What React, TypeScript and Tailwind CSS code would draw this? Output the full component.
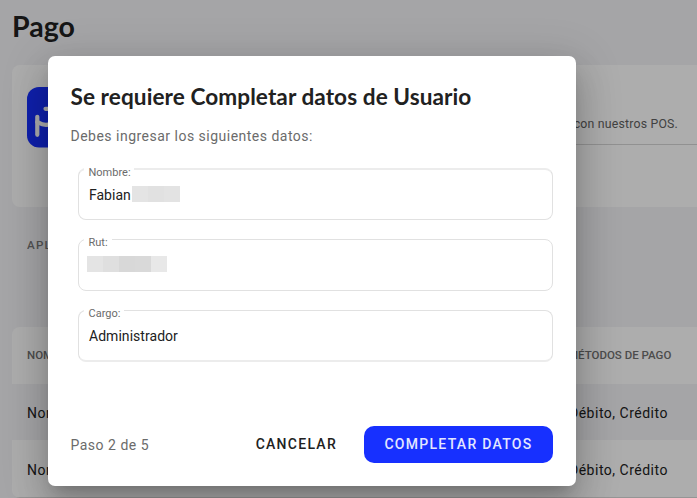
import { ReactNode } from "react";
import clsx from "clsx";

const rows = [
  { name: "Nombre local 1", methods: "Débito, Crédito" },
  { name: "Nombre local 2", methods: "Débito, Crédito" },
];

function AppLogo() {
  return (
    <svg viewBox="0 0 60 60" className="w-[60px] h-[60px] shrink-0 overflow-visible">
      <rect width="60" height="60.600" rx="12" fill="#1730ff" />
      <g fill="none" stroke="#fff" strokeWidth="4.200" strokeLinecap="round" strokeLinejoin="round">
        <path d="M10.300 29.800v18" />
        <path d="M10.300 35c2 1 4 2.800 8.700 2.800 9 0 15-4 15-10 0-4-3-6-7-6h-8.500" />
      </g>
    </svg>
  );
}

function Field({ label, labelWidth, edge, children }: { label: string; labelWidth: string; edge: string; children?: ReactNode }) {
  return (
    <div className={clsx("relative flex h-[52px] items-center rounded-[8px] border border-[#e1e1e1] pl-[10px]", edge)}>
      <span className={clsx("absolute -top-[3px] left-[5px] h-[11px] overflow-hidden bg-white pl-[4.500px] text-[11px] leading-[11px] text-[#6b6b6b]", labelWidth)}>
        {label}
      </span>
      {children}
    </div>
  );
}

export default function App() {
  return (
    <div className="relative h-[498px] w-[697px] overflow-hidden bg-[#f4f4f7] font-['Roboto','Liberation_Sans',sans-serif] text-[#212121]">
      {/* Page behind the dialog */}
      <div className="flex w-[760px] flex-col pl-[12px]">
        <h1 className="h-[65px] pt-[7px] font-['Lato',sans-serif] text-[28.500px] font-bold leading-[38px]">Pago</h1>

        <section className="flex h-[142px] rounded-[8px] bg-white pl-[15px] pt-[22px]">
          <AppLogo />
          <div className="ml-[28px] flex h-[58px] w-[640px] flex-col border-b border-[#d6d6d6] pt-[28px]">
            <p className="w-[563px] text-right text-[12.300px] leading-[18px] tracking-[0.200px] text-[#616161]">
              Vende con nuestros POS.
            </p>
          </div>
        </section>

        <div className="h-[120px] pl-[15px] pt-[30px] text-[11.600px] font-medium leading-[16px] tracking-[1.200px] text-[#7a7a7a]">
          <span className="block w-[50px] overflow-hidden">APLIC</span>
        </div>

        <section className="overflow-hidden rounded-[8px] bg-white">
          <div className="grid h-[57px] grid-cols-[541px_1fr] items-center pl-[15px] pt-px text-[11.500px] font-medium text-[#717171]">
            <span>NOMBRE</span>
            <span>MÉTODOS DE PAGO</span>
          </div>
          {rows.map((row, i) => (
            <div
              key={row.name}
              className={clsx(
                "grid grid-cols-[542px_1fr] items-center pl-[15px] text-[14px] tracking-[0.500px]",
                i === 0 ? "h-[56px] bg-[#f4f4f7] pt-[2px]" : "h-[58px] border-b border-[#dcdcdc] pt-[3px]"
              )}
            >
              <span>{row.name}</span>
              <span>{row.methods}</span>
            </div>
          ))}
        </section>
      </div>

      {/* Dialog */}
      <div className="absolute inset-0 flex items-start bg-black/[0.320] pl-[48px] pt-[55.500px]">
        <div className="flex h-[430.500px] w-[527.500px] flex-col rounded-[7px] bg-white px-[22.500px] shadow-[0_10px_14px_-7px_rgba(0,0,0,0.2),0_23px_36px_3px_rgba(0,0,0,0.14),0_8px_43px_8px_rgba(0,0,0,0.12)]">
          <h2 className="mt-[26.500px] whitespace-nowrap font-['Lato',sans-serif] text-[22.600px] font-bold leading-[30px] tracking-[0.070px]">
            Se requiere Completar datos de Usuario
          </h2>
          <p className="mt-[14px] text-[14px] leading-[20px] tracking-[0.490px] text-[#6b6b6b]">
            Debes ingresar los siguientes datos:
          </p>

          <div className="ml-[7.500px] mt-[22px] flex w-[475px] flex-col gap-[19px] text-[14px]">
            <Field label="Nombre:" labelWidth="w-[50px]" edge="border-t-2 border-t-[#ececec]">
              <span className="pt-px">Fabian</span>
              <span className="ml-px flex pb-[2px]">
                <i className="h-[16px] w-[16px] bg-[#e4e4e4]" />
                <i className="h-[16px] w-[16px] bg-[#e1e1e1]" />
                <i className="h-[16px] w-[16px] bg-[#e3e3e3]" />
              </span>
            </Field>
            <Field label="Rut:" labelWidth="w-[28px]" edge="pb-[2px]">
              <span className="-ml-[2px] flex">
                <i className="h-[16px] w-[16px] bg-[#e4e4e4]" />
                <i className="h-[16px] w-[16px] bg-[#dfdfdf]" />
                <i className="h-[16px] w-[16px] bg-[#d8d8d8]" />
                <i className="h-[16px] w-[16px] bg-[#d9d9d9]" />
                <i className="h-[16px] w-[16px] bg-[#e8e8e8]" />
              </span>
            </Field>
            <Field label="Cargo:" labelWidth="w-[40px]" edge="border-b-2 border-b-[#ececec]">
              <span className="pt-[2px] tracking-[0.040px]">Administrador</span>
            </Field>
          </div>

          <div className="mt-[63.500px] flex h-[38px] w-[482.500px] items-center">
            <span className="pt-px text-[14px] tracking-[0.500px] text-[#6b6b6b]">Paso 2 de 5</span>
            <button className="ml-auto mr-[27px] text-[14px] font-medium tracking-[1.270px]">CANCELAR</button>
            <button className="h-[37.500px] w-[189px] rounded-[10px] bg-[#1730ff] text-[14px] font-medium tracking-[1.280px] text-[#e3e6ff]">
              COMPLETAR DATOS
            </button>
          </div>
        </div>
      </div>
    </div>
  );
}
